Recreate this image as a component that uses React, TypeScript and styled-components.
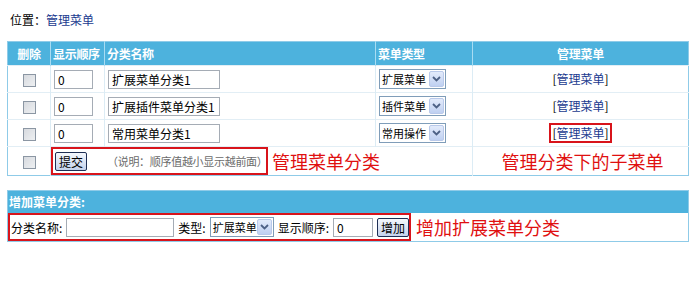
import React from 'react';
import styled, { createGlobalStyle } from 'styled-components';

const GlobalStyle = createGlobalStyle`
  html, body {
    margin: 0;
    padding: 0;
    background: #fff;
  }
  body {
    font-family: "Noto Sans CJK SC", "Liberation Sans", sans-serif;
    font-size: 12px;
    color: #000;
  }
`;

const rows = [
  { name: '扩展菜单分类1', type: '扩展菜单', marked: false },
  { name: '扩展插件菜单分类1', type: '插件菜单', marked: false },
  { name: '常用菜单分类1', type: '常用操作', marked: true },
];

const Select: React.FC<{ value: string }> = ({ value }) => (
  <SelectBox>
    <SelectText>{value}</SelectText>
    <SelectArrow>
      <svg width="9" height="6" viewBox="0 0 9 6">
        <path d="M1 1 L4.5 4.5 L8 1" fill="none" stroke="#4d6185" strokeWidth="1.8" />
      </svg>
    </SelectArrow>
  </SelectBox>
);

const App: React.FC = () => {
  return (
    <Page>
      <GlobalStyle />
      <Location>
        位置：<LocationLink>管理菜单</LocationLink>
      </Location>

      <Table>
        <colgroup>
          <col style={{ width: 43 }} />
          <col style={{ width: 54 }} />
          <col style={{ width: 271 }} />
          <col style={{ width: 97 }} />
          <col />
        </colgroup>
        <thead>
          <tr>
            <Th align="center">删除</Th>
            <Th>显示顺序</Th>
            <Th>分类名称</Th>
            <Th>菜单类型</Th>
            <Th align="center">管理菜单</Th>
          </tr>
        </thead>
        <tbody>
          {rows.map((row) => (
            <tr key={row.name}>
              <Td align="center">
                <Checkbox />
              </Td>
              <Td>
                <TextInput width={39} value="0" readOnly />
              </Td>
              <Td>
                <TextInput width={112} value={row.name} readOnly />
              </Td>
              <Td>
                <Select value={row.type} />
              </Td>
              <Td align="center">
                <ManageLink marked={row.marked}>
                  [<LinkText>管理菜单</LinkText>]
                </ManageLink>
              </Td>
            </tr>
          ))}
          <tr>
            <Td align="center" tall>
              <Checkbox />
            </Td>
            <Td colSpan={3} tall flush>
              <SubmitLine>
                <RedFrame>
                  <Button>提交</Button>
                  <Note>（说明：顺序值越小显示越前面）</Note>
                </RedFrame>
                <Annotation>管理菜单分类</Annotation>
              </SubmitLine>
            </Td>
            <Td align="center" tall>
              <Annotation>管理分类下的子菜单</Annotation>
            </Td>
          </tr>
        </tbody>
      </Table>

      <AddPanel>
        <AddHeader>增加菜单分类:</AddHeader>
        <AddBody>
          <RedFrame wide>
            <Label>分类名称:</Label>
            <TextInput width={108} />
            <Label>类型:</Label>
            <Select value="扩展菜单" />
            <Label>显示顺序:</Label>
            <TextInput width={40} value="0" readOnly />
            <Button>增加</Button>
          </RedFrame>
          <Annotation>增加扩展菜单分类</Annotation>
        </AddBody>
      </AddPanel>
    </Page>
  );
};

export default App;

const Page = styled.div`
  width: 700px;
  height: 292px;
  padding: 12px 0 0 7px;
  box-sizing: border-box;
`;

const Location = styled.div`
  padding-left: 3px;
  height: 14px;
  line-height: 14px;
  font-size: 12px;
  margin-top: 1px;
`;

const LocationLink = styled.span`
  color: #1b3b8f;
`;

const Table = styled.table`
  margin-top: 14px;
  width: 682px;
  border-collapse: collapse;
  table-layout: fixed;
  border: 1px solid #8fcbe8;
`;

const Th = styled.th<{ align?: string }>`
  height: 23px;
  padding: 0 2px;
  background: #4db2dd;
  color: #fff;
  font-weight: bold;
  font-size: 12px;
  line-height: 14px;
  white-space: nowrap;
  letter-spacing: -0.3px;
  text-align: ${({ align }) => align || 'left'};
  border-left: 1px solid #a8dcf2;
  &:first-child {
    border-left: none;
  }
`;

const Td = styled.td<{ align?: string; tall?: boolean; flush?: boolean }>`
  height: ${({ tall }) => (tall ? '27px' : '26px')};
  padding: ${({ flush }) => (flush ? '0' : '0 3px')};
  text-align: ${({ align }) => align || 'left'};
  border-top: 1px solid #e2eef5;
  border-left: 1px solid #dcecf5;
  vertical-align: middle;
  line-height: 14px;
  &:first-child {
    border-left: none;
  }
`;

const Checkbox = styled.span`
  display: inline-block;
  width: 11px;
  height: 11px;
  border: 1px solid #8b96a3;
  background: linear-gradient(135deg, #d7dadf 0%, #eef0f2 100%);
  vertical-align: middle;
`;

const TextInput = styled.input<{ width: number }>`
  width: ${({ width }) => width}px;
  height: 19px;
  box-sizing: border-box;
  border: 1px solid #a5acb5;
  padding: 0 3px;
  font: 12px "Noto Sans CJK SC", "Liberation Sans", sans-serif;
  color: #000;
  background: #fff;
  vertical-align: middle;
  outline: none;
`;

const SelectBox = styled.span`
  display: inline-flex;
  align-items: center;
  width: 67px;
  height: 20px;
  box-sizing: border-box;
  border: 1px solid #7f9db9;
  background: #fff;
  vertical-align: middle;
`;

const SelectText = styled.span`
  flex: 1;
  padding-left: 2px;
  font-size: 11px;
  white-space: nowrap;
`;

const SelectArrow = styled.span`
  width: 15px;
  height: 16px;
  margin-right: 1px;
  flex: none;
  display: flex;
  align-items: center;
  justify-content: center;
  border: 1px solid #b9c9ea;
  border-radius: 2px;
  box-sizing: border-box;
  background: linear-gradient(#e3ebfb, #bfd0f1);
`;

const ManageLink = styled.span<{ marked: boolean }>`
  display: inline-block;
  padding: 1px 1px;
  border: 2px solid ${({ marked }) => (marked ? '#d8141b' : 'transparent')};
  color: #000;
`;

const LinkText = styled.span`
  color: #1b3b8f;
`;

const SubmitLine = styled.div`
  display: flex;
  align-items: center;
  height: 28px;
`;

const RedFrame = styled.div<{ wide?: boolean }>`
  display: flex;
  align-items: center;
  gap: ${({ wide }) => (wide ? '4px' : '20px')};
  height: 100%;
  box-sizing: border-box;
  border: 2px solid #d8141b;
  padding: ${({ wide }) => (wide ? '0 5px 0 1px' : '0 6px 0 2px')};
  ${({ wide }) => (wide ? 'width: 403px;' : 'width: 217px;')}
`;

const Button = styled.button`
  height: 19px;
  padding: 0 3px;
  flex: none;
  white-space: nowrap;
  font: 12px "Noto Sans CJK SC", "Liberation Sans", sans-serif;
  color: #000;
  border: 1px solid #1e2f55;
  border-radius: 2px;
  background: linear-gradient(#f5f8fd, #c4d2ec);
  line-height: 15px;
`;

const Note = styled.span`
  color: #6b6b6b;
  font-size: 11px;
  white-space: nowrap;
  letter-spacing: -0.3px;
`;

const Annotation = styled.span`
  color: #e01010;
  font-size: 18px;
  line-height: 20px;
  white-space: nowrap;
  padding-left: 4px;
`;

const AddPanel = styled.div`
  margin-top: 14px;
  width: 682px;
  box-sizing: border-box;
  border: 1px solid #8fcbe8;
`;

const AddHeader = styled.div`
  height: 22px;
  line-height: 22px;
  background: #4db2dd;
  color: #fff;
  font-weight: bold;
  padding-left: 1px;
`;

const AddBody = styled.div`
  display: flex;
  align-items: center;
  height: 28px;
  & > ${Annotation} {
    padding-left: 5px;
  }
`;

const Label = styled.span`
  color: #000;
  white-space: nowrap;
`;
